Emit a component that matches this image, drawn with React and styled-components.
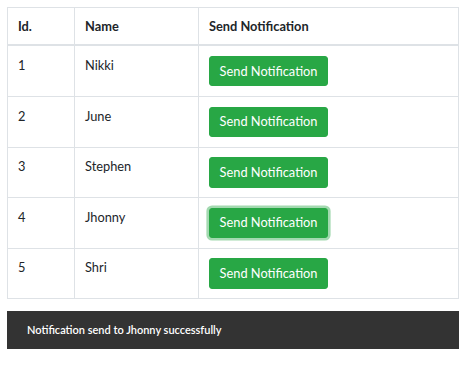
import React from "react";
import styled, { createGlobalStyle } from "styled-components";

const Global = createGlobalStyle`
  html, body { margin: 0; padding: 0; background: #fff; }
  body {
    font-family: "Segoe UI", "Lato", "Open Sans", sans-serif;
    color: #212529;
    font-size: 12.8px;
    line-height: 1.5;
  }
`;

const Page = styled.div`
  padding: 7px 13px 0 7px;
  display: flex;
  flex-direction: column;
  gap: 12px;
`;

const Table = styled.table`
  width: 452px;
  border-collapse: collapse;
  border: 1px solid #dee2e6;
`;

const Th = styled.th`
  text-align: left;
  font-weight: 700;
  padding: 8.6px 10px;
  border: 1px solid #dee2e6;
  border-bottom-width: 2px;
  width: ${(p) => p.$w || "auto"};
  color: #212529;
`;

const Td = styled.td`
  padding: 9.6px 10px;
  border: 1px solid #dee2e6;
  vertical-align: top;
  color: #212529;
`;

const Button = styled.button`
  font-family: inherit;
  font-size: 12.8px;
  line-height: 19.2px;
  color: #fff;
  background: #28a745;
  border: 1px solid #28a745;
  border-radius: 3px;
  padding: 4.6px 9.6px;
  cursor: pointer;
  box-shadow: ${(p) => (p.$focus ? "0 0 0 2.6px rgba(72,180,97,0.5)" : "none")};
  display: block;
`;

const Toast = styled.div`
  width: 452px;
  height: 38px;
  box-sizing: border-box;
  background: #333333;
  color: #fff;
  font-size: 11px;
  font-weight: 600;
  display: flex;
  align-items: center;
  padding-left: 20px;
`;

const rows = [
  { id: 1, name: "Nikki" },
  { id: 2, name: "June" },
  { id: 3, name: "Stephen" },
  { id: 4, name: "Jhonny", focus: true },
  { id: 5, name: "Shri" },
];

export default function App() {
  return (
    <>
      <Global />
      <Page>
        <Table>
          <thead>
            <tr>
              <Th $w="46px">Id.</Th>
              <Th $w="103px">Name</Th>
              <Th>Send Notification</Th>
            </tr>
          </thead>
          <tbody>
            {rows.map((r) => (
              <tr key={r.id}>
                <Td>{r.id}</Td>
                <Td>{r.name}</Td>
                <Td>
                  <Button $focus={r.focus}>Send Notification</Button>
                </Td>
              </tr>
            ))}
          </tbody>
        </Table>
        <Toast>Notification send to Jhonny successfully</Toast>
      </Page>
    </>
  );
}
